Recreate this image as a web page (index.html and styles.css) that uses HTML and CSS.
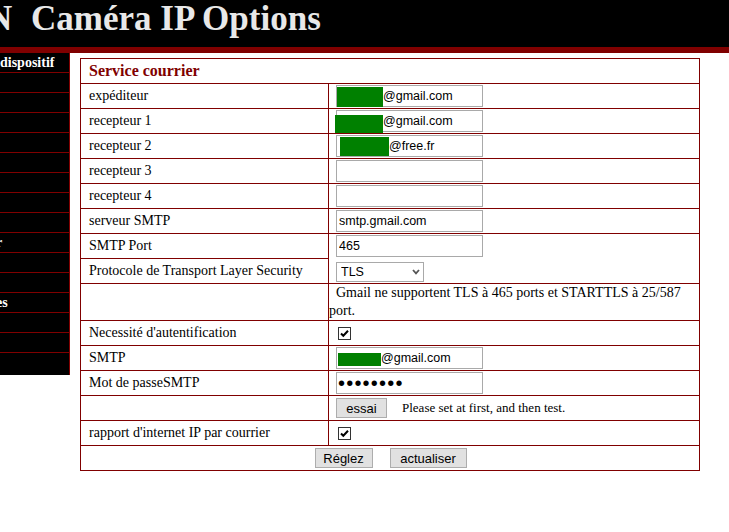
FILE: index.html
```html
<!DOCTYPE html>
<html lang="fr">
<head>
<meta charset="utf-8">
<title>Caméra IP Options</title>
<link rel="stylesheet" href="styles.css">
</head>
<body>
<header class="top">
  <h1 class="title"><span class="cut">N</span> Caméra IP Options</h1>
</header>
<div class="bar"></div>
<div class="layout">
  <nav class="side">
    <div class="item">dispositif</div>
    <div class="item"></div>
    <div class="item"></div>
    <div class="item"></div>
    <div class="item"></div>
    <div class="item"></div>
    <div class="item"></div>
    <div class="item"></div>
    <div class="item"></div>
    <div class="item tail-r">r</div>
    <div class="item"></div>
    <div class="item"></div>
    <div class="item tail-es">es</div>
    <div class="item"></div>
    <div class="item"></div>
    <div class="item last"></div>
  </nav>
  <main class="content">
    <table class="mail">
      <tr><th colspan="2">Service courrier</th></tr>
      <tr>
        <td class="lbl">expéditeur</td>
        <td class="val"><div class="ctl"><span class="field"><input class="txt p-a" type="text" value="@gmail.com"><span class="mask m1"></span></span></div></td>
      </tr>
      <tr>
        <td class="lbl">recepteur 1</td>
        <td class="val"><div class="ctl"><span class="field"><input class="txt p-a" type="text" value="@gmail.com"><span class="mask m2"></span></span></div></td>
      </tr>
      <tr>
        <td class="lbl">recepteur 2</td>
        <td class="val"><div class="ctl"><span class="field"><input class="txt p-b" type="text" value="@free.fr"><span class="mask m3"></span></span></div></td>
      </tr>
      <tr>
        <td class="lbl">recepteur 3</td>
        <td class="val"><div class="ctl"><input class="txt" type="text" value=""></div></td>
      </tr>
      <tr>
        <td class="lbl">recepteur 4</td>
        <td class="val"><div class="ctl"><input class="txt" type="text" value=""></div></td>
      </tr>
      <tr>
        <td class="lbl">serveur SMTP</td>
        <td class="val"><div class="ctl"><input class="txt" type="text" value="smtp.gmail.com"></div></td>
      </tr>
      <tr>
        <td class="lbl">SMTP Port</td>
        <td class="val" rowspan="2">
          <div class="stack">
            <input class="txt" type="text" value="465">
            <span class="sel">
              <select class="select"><option>TLS</option><option>STARTTLS</option><option>Aucun</option></select>
              <svg class="chev" width="8" height="6" viewBox="0 0 8 6"><path d="M1 1 L4 4.3 L7 1" fill="none" stroke="#555" stroke-width="1.8"/></svg>
            </span>
          </div>
        </td>
      </tr>
      <tr>
        <td class="lbl">Protocole de Transport Layer Security</td>
      </tr>
      <tr>
        <td class="lbl"></td>
        <td class="note">&nbsp;&nbsp;Gmail ne supportent TLS à 465 ports et STARTTLS à 25/587 port.</td>
      </tr>
      <tr>
        <td class="lbl">Necessité d'autentification</td>
        <td class="val"><div class="ctl"><span class="cb" role="checkbox" aria-checked="true"><svg width="13" height="13" viewBox="0 0 13 13"><rect x="0.5" y="0.5" width="12" height="12" fill="#fff" stroke="#333"/><path d="M3 6.5 L5.3 8.8 L10 3.8" fill="none" stroke="#000" stroke-width="2"/></svg></span></div></td>
      </tr>
      <tr>
        <td class="lbl">SMTP</td>
        <td class="val"><div class="ctl"><span class="field"><input class="txt p-c" type="text" value="@gmail.com"><span class="mask m4"></span></span></div></td>
      </tr>
      <tr>
        <td class="lbl">Mot de passeSMTP</td>
        <td class="val"><div class="ctl"><input class="txt pw" type="password" value="12345678"></div></td>
      </tr>
      <tr>
        <td class="lbl"></td>
        <td class="val"><div class="ctl"><button class="btn btn-test" type="button">essai</button><span class="hint">Please set at first, and then test.</span></div></td>
      </tr>
      <tr>
        <td class="lbl">rapport d'internet IP par courrier</td>
        <td class="val"><div class="ctl"><span class="cb" role="checkbox" aria-checked="true"><svg width="13" height="13" viewBox="0 0 13 13"><rect x="0.5" y="0.5" width="12" height="12" fill="#fff" stroke="#333"/><path d="M3 6.5 L5.3 8.8 L10 3.8" fill="none" stroke="#000" stroke-width="2"/></svg></span></div></td>
      </tr>
      <tr>
        <td class="foot" colspan="2"><div class="actions"><button class="btn btn-set" type="button">Réglez</button><button class="btn btn-refresh" type="button">actualiser</button></div></td>
      </tr>
    </table>
  </main>
</div>
</body>
</html>
```
FILE: styles.css
```css
* { box-sizing: border-box; }
html, body { margin: 0; padding: 0; background: #fff; }
body {
  font-family: "Liberation Serif", "Times New Roman", serif;
  color: #000;
  overflow: hidden;
}
.top {
  background: #000;
  height: 47px;
  overflow: hidden;
}
.title {
  margin: 0 0 0 -13px;
  font-size: 35px;
  line-height: 37px;
  font-weight: bold;
  color: #e8e8e8;
  white-space: nowrap;
}
.cut { margin-right: 10px; }
.bar { height: 6px; background: #800000; }
.layout { display: flex; align-items: flex-start; }
.side {
  width: 70px;
  height: 322px;
  background: #000;
  border-right: 1px solid #800000;
  overflow: hidden;
  flex-shrink: 0;
}
.item {
  height: 20px;
  border-bottom: 1px solid #800000;
  color: #fff;
  font-size: 14px;
  font-weight: bold;
  line-height: 19px;
  white-space: nowrap;
}
.item.last { border-bottom: 0; }
.tail-r { text-indent: -4px; }
.tail-es { text-indent: -4px; }
.content { margin: 5px 0 0 10px; }
.mail {
  border-collapse: collapse;
  width: 620px;
  border: 1px solid #800000;
}
.mail th, .mail td {
  border: 1px solid #800000;
  padding: 0 1px;
  height: 25px;
  font-size: 14px;
  vertical-align: middle;
}
.mail th {
  text-align: left;
  color: #800000;
  font-size: 16px;
  font-weight: bold;
  padding-left: 8px;
}
.mail td.lbl { width: 248px; padding-left: 8px; }
.mail td.val { padding-left: 7px; }
.mail td.note { line-height: 18px; padding: 0; height: 37px; }
.ctl { display: flex; align-items: center; }
.stack { display: flex; flex-direction: column; align-items: flex-start; gap: 5px; }
.field { position: relative; display: block; }
.txt {
  display: block;
  width: 147px;
  height: 22px;
  margin: 0;
  border: 1px solid #a9a9a9;
  padding: 0 2px;
  font-family: "Liberation Sans", Arial, sans-serif;
  font-size: 12.5px;
  color: #000;
  background: #fff;
  outline: none;
}
.p-a { padding-left: 46px; }
.p-b { padding-left: 52px; }
.p-c { padding-left: 44px; }
.pw { font-size: 20px; letter-spacing: 1.2px; padding-left: 1px; }
.mask { position: absolute; background: #008000; }
.m1 { left: 1px; top: 2px; width: 46px; height: 20px; }
.m2 { left: -1px; top: 5px; width: 48px; height: 18px; }
.m3 { left: 4px; top: 2px; width: 49px; height: 19px; }
.m4 { left: 2px; top: 6px; width: 43px; height: 13px; }
.sel { position: relative; display: block; }
.select {
  -webkit-appearance: none;
  appearance: none;
  display: block;
  width: 88px;
  height: 20px;
  margin: 0;
  border: 1px solid #a9a9a9;
  border-radius: 0;
  padding: 0 0 0 4px;
  background: #fff;
  font-family: "Liberation Sans", Arial, sans-serif;
  font-size: 12.5px;
  color: #000;
}
.chev { position: absolute; right: 4px; top: 7px; pointer-events: none; }
.cb { display: block; width: 13px; height: 13px; margin-left: 2px; }
.cb svg { display: block; }
.btn {
  height: 20px;
  margin: 0;
  padding: 0;
  border: 1px solid #adadad;
  border-radius: 0;
  background: #e1e1e1;
  font-family: "Liberation Sans", Arial, sans-serif;
  font-size: 13px;
  color: #000;
}
.btn-test { width: 51px; }
.btn-set { width: 58px; }
.btn-refresh { width: 77px; }
.hint { margin-left: 15px; font-size: 13px; }
.mail td.foot { text-align: center; }
.actions { display: flex; justify-content: center; gap: 17px; padding-left: 1px; }
```
